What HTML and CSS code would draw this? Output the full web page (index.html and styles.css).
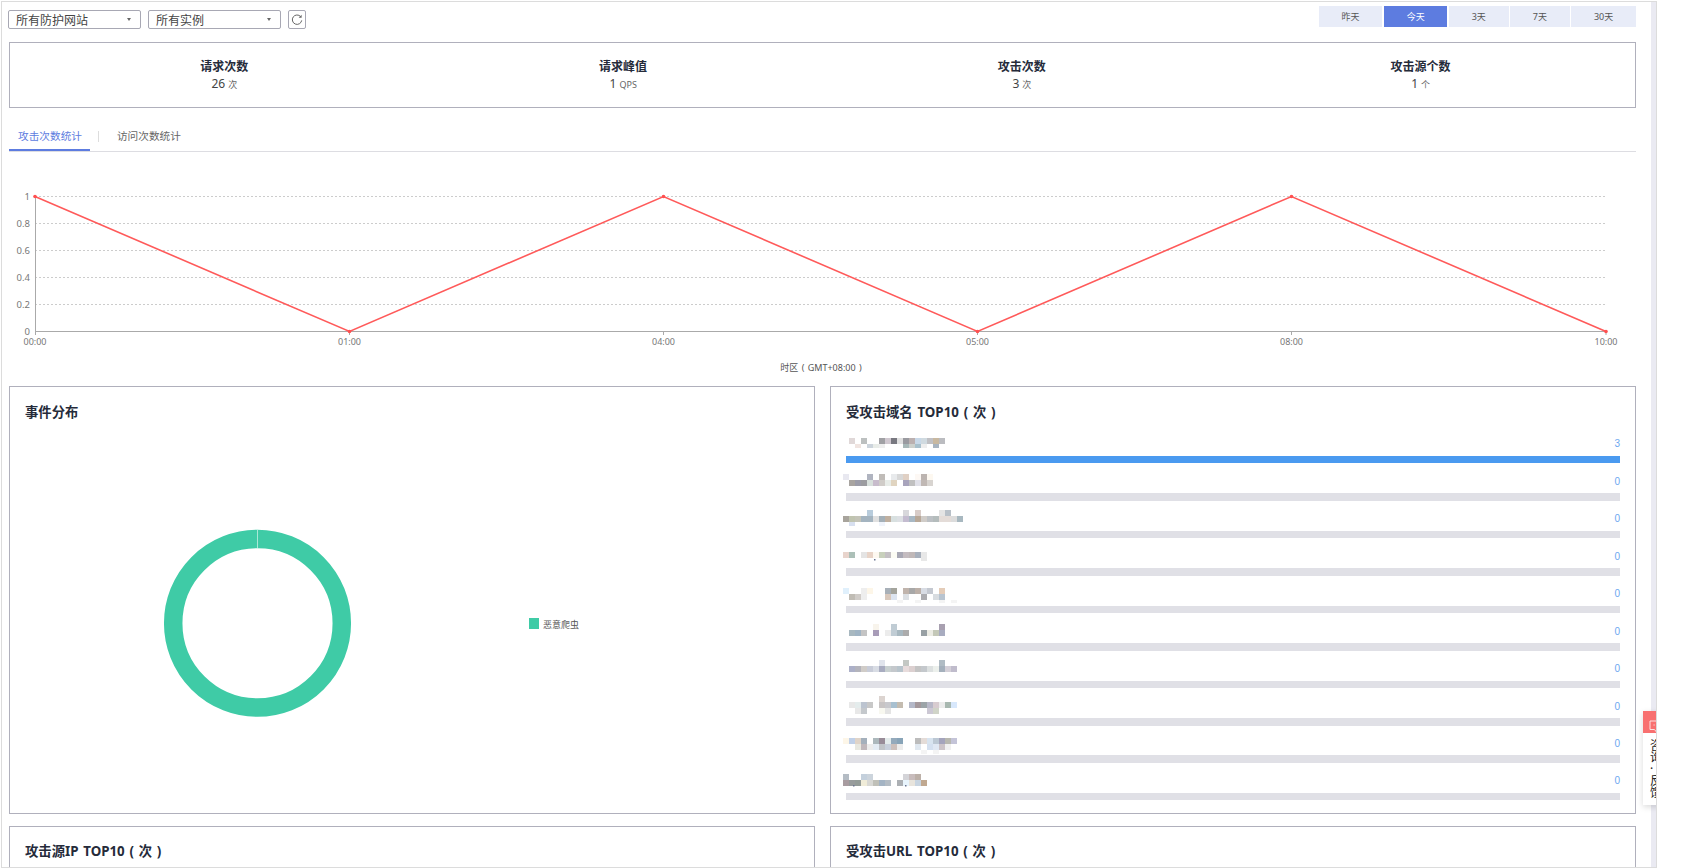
FILE: index.html
```html
<!DOCTYPE html>
<html lang="zh-CN">
<head>
<meta charset="utf-8">
<title>防护统计</title>
<link rel="stylesheet" href="styles.css">
</head>
<body>
<div class="frame">
  <main class="main">
    <div class="toolbar">
      <div class="filters">
        <div class="select"><span>所有防护网站</span><i class="caret"></i></div>
        <div class="select"><span>所有实例</span><i class="caret"></i></div>
        <button class="refresh" type="button" aria-label="刷新">
          <svg width="12" height="12" viewBox="0 0 12 12"><path class="refresh-arc" d="M9.6 2.6A4.7 4.7 0 1 0 10.7 6.4"/><path class="refresh-head" d="M10.6 0.8v3h-3z"/></svg>
        </button>
      </div>
      <div class="ranges">
        <button class="range" type="button">昨天</button>
        <button class="range is-active" type="button">今天</button>
        <button class="range" type="button">3天</button>
        <button class="range" type="button">7天</button>
        <button class="range" type="button">30天</button>
      </div>
    </div>

    <section class="stats">
      <div class="stat"><div class="stat-title">请求次数</div><div class="stat-value">26 <small>次</small></div></div>
      <div class="stat"><div class="stat-title">请求峰值</div><div class="stat-value">1 <small>QPS</small></div></div>
      <div class="stat"><div class="stat-title">攻击次数</div><div class="stat-value">3 <small>次</small></div></div>
      <div class="stat"><div class="stat-title">攻击源个数</div><div class="stat-value">1 <small>个</small></div></div>
    </section>

    <nav class="tabs">
      <a class="tab is-active">攻击次数统计</a>
      <i class="tab-sep"></i>
      <a class="tab tab-second">访问次数统计</a>
    </nav>

    <svg class="line-chart" width="1627" height="234" viewBox="9 152 1627 234">
      <g class="grid">
        <path d="M35 196.5H1606M35 223.5H1606M35 250.5H1606M35 277.5H1606M35 304.5H1606"/>
      </g>
      <path class="axis" d="M35.5 196V335M35 331.5H1606M349.5 331V335M663.5 331V335M977.5 331V335M1291.5 331V335M1606 331V335"/>
      <g class="ylabels">
        <text x="30" y="200">1</text>
        <text x="30" y="227">0.8</text>
        <text x="30" y="254">0.6</text>
        <text x="30" y="281">0.4</text>
        <text x="30" y="308">0.2</text>
        <text x="30" y="335">0</text>
      </g>
      <g class="xlabels">
        <text x="35" y="345">00:00</text>
        <text x="349.5" y="345">01:00</text>
        <text x="663.5" y="345">04:00</text>
        <text x="977.5" y="345">05:00</text>
        <text x="1291.5" y="345">08:00</text>
        <text x="1606" y="345">10:00</text>
      </g>
      <polyline class="series" points="35,196.5 349.5,331.5 663.5,196.5 977.5,331.5 1291.5,196.5 1606,331.5"/>
      <g class="dots">
        <circle cx="35" cy="196.5" r="1.8"/><circle cx="349.5" cy="331.5" r="1.8"/><circle cx="663.5" cy="196.5" r="1.8"/>
        <circle cx="977.5" cy="331.5" r="1.8"/><circle cx="1291.5" cy="196.5" r="1.8"/><circle cx="1606" cy="331.5" r="1.8"/>
      </g>
      <text class="zone" x="821" y="371">时区 ( GMT+08:00 )</text>
    </svg>

    <div class="cards">
      <section class="card">
        <h3 class="card-title">事件分布</h3>
        <svg class="pie" width="804" height="390" viewBox="10 423 804 390">
          <circle class="ring" cx="257.5" cy="623.3" r="84.3"/>
          <path class="ring-cut" d="M257.5 530V549"/>
          <rect class="swatch" x="529" y="618" width="10" height="11"/>
          <text class="legend" x="543" y="627.5">恶意爬虫</text>
        </svg>
      </section>

      <section class="card">
        <h3 class="card-title">受攻击域名 TOP10 ( 次 )</h3>
        <div class="rank-list">
          <div class="rank">
            <div class="rank-head">
              <svg class="mosaic" width="130" height="30">
                <rect class="px" x="6" y="12" fill="#e0d8d8"/><rect class="px" x="18" y="12" fill="#bcc0c0"/><rect class="px" x="36" y="12" fill="#a0a0a4"/><rect class="px" x="42" y="12" fill="#d0c8d0"/><rect class="px" x="48" y="12" fill="#787880"/><rect class="px" x="54" y="12" fill="#e0e0e0"/><rect class="px" x="60" y="12" fill="#9a9aa0"/><rect class="px" x="66" y="12" fill="#bbb0b0"/><rect class="px" x="72" y="12" fill="#c8d8e8"/><rect class="px" x="78" y="12" fill="#d0dae0"/><rect class="px" x="84" y="12" fill="#c0c0c4"/><rect class="px" x="90" y="12" fill="#c8b8a0"/><rect class="px" x="96" y="12" fill="#bbbcc0"/>
                <rect class="ph" x="12" y="18" fill="#f0e4e0"/><rect class="ph" x="24" y="18" fill="#ccd4dc"/><rect class="ph" x="30" y="18" fill="#e8ece8"/><rect class="ph" x="36" y="18" fill="#eeeeee"/><rect class="ph" x="60" y="18" fill="#a8b8b8"/><rect class="ph" x="66" y="18" fill="#ccd0cc"/><rect class="ph" x="72" y="18" fill="#a8c0cc"/><rect class="ph" x="78" y="18" fill="#eeeeee"/><rect class="ph" x="90" y="18" fill="#a8b4c0"/>
              </svg>
              <span class="rank-value">3</span>
            </div>
            <div class="rank-bar"><div class="rank-fill"></div></div>
          </div>
          <div class="rank">
            <div class="rank-head">
              <svg class="mosaic" width="130" height="30">
                <rect class="px" x="0" y="11" fill="#e8e8f0"/><rect class="px" x="24" y="11" fill="#b0b4c0"/><rect class="px" x="36" y="11" fill="#c0bcb8"/><rect class="px" x="48" y="11" fill="#e8eaec"/><rect class="px" x="54" y="11" fill="#d8d8d8"/><rect class="px" x="60" y="11" fill="#e0d0c4"/><rect class="px" x="72" y="11" fill="#fdf8f4"/><rect class="px" x="78" y="11" fill="#bcb4b0"/><rect class="px" x="84" y="11" fill="#fdf8f0"/>
                <rect class="px" x="6" y="17" fill="#a8a4a0"/><rect class="px" x="12" y="17" fill="#9c9ca8"/><rect class="px" x="18" y="17" fill="#9c9ca0"/><rect class="px" x="24" y="17" fill="#d8e0dc"/><rect class="px" x="30" y="17" fill="#c8bccc"/><rect class="px" x="36" y="17" fill="#d0ccc8"/><rect class="px" x="42" y="17" fill="#e8ece8"/><rect class="px" x="48" y="17" fill="#e0d4c0"/><rect class="px" x="60" y="17" fill="#a8a4bc"/><rect class="px" x="66" y="17" fill="#c0c0c0"/><rect class="px" x="72" y="17" fill="#e0e0e8"/><rect class="px" x="78" y="17" fill="#c0b8b4"/><rect class="px" x="84" y="17" fill="#d8d4d0"/>
              </svg>
              <span class="rank-value">0</span>
            </div>
            <div class="rank-bar"></div>
          </div>
          <div class="rank">
            <div class="rank-head">
              <svg class="mosaic" width="130" height="30">
                <rect class="px" x="24" y="9" fill="#b8ccdc"/><rect class="px" x="60" y="9" fill="#d8d8dc"/><rect class="px" x="72" y="9" fill="#d8ccc8"/><rect class="px" x="96" y="9" fill="#e4e4e4"/><rect class="px" x="102" y="9" fill="#b8c0c8"/>
                <rect class="px" x="0" y="15" fill="#a8a49c"/><rect class="px" x="6" y="15" fill="#c0c4b0"/><rect class="px" x="12" y="15" fill="#c4c4b8"/><rect class="px" x="18" y="15" fill="#a4b4c0"/><rect class="px" x="24" y="15" fill="#a4b4c0"/><rect class="px" x="30" y="15" fill="#e0e0e0"/><rect class="px" x="36" y="15" fill="#a4b0b8"/><rect class="px" x="42" y="15" fill="#c0b0a0"/><rect class="px" x="48" y="15" fill="#d8e0e0"/><rect class="px" x="54" y="15" fill="#dde0e4"/><rect class="px" x="60" y="15" fill="#c4bcd0"/><rect class="px" x="66" y="15" fill="#a8b8c4"/><rect class="px" x="72" y="15" fill="#b8a898"/><rect class="px" x="78" y="15" fill="#d0ccc8"/><rect class="px" x="84" y="15" fill="#bcc0c4"/><rect class="px" x="90" y="15" fill="#b4bcbc"/><rect class="px" x="96" y="15" fill="#e4dcd8"/><rect class="px" x="102" y="15" fill="#e4dcd8"/><rect class="px" x="108" y="15" fill="#dcdcdc"/><rect class="px" x="114" y="15" fill="#a8b8c0"/>
                <rect class="ph" x="6" y="21" fill="#d8e0f0"/><rect class="ph" x="36" y="21" fill="#f0f4fc"/>
              </svg>
              <span class="rank-value">0</span>
            </div>
            <div class="rank-bar"></div>
          </div>
          <div class="rank">
            <div class="rank-head">
              <svg class="mosaic" width="130" height="30">
                <rect class="px" x="0" y="14" fill="#e8d4cc"/><rect class="px" x="6" y="14" fill="#acc0b8"/><rect class="px" x="18" y="14" fill="#e4e4e4"/><rect class="px" x="24" y="14" fill="#e8d4c8"/><rect class="px" x="30" y="14" fill="#fdf8f0"/><rect class="px" x="36" y="14" fill="#c8d0bc"/><rect class="px" x="42" y="14" fill="#c4c0c4"/><rect class="px" x="48" y="14" fill="#fcfcf4"/><rect class="px" x="54" y="14" fill="#a8a8b4"/><rect class="px" x="60" y="14" fill="#c4bcc0"/><rect class="px" x="66" y="14" fill="#c0b8b8"/><rect class="px" x="72" y="14" fill="#a8b0bc"/><rect class="px" x="78" y="14" fill="#e8e8e8"/>
                <rect class="ps" x="78" y="20" fill="#e8e8e8" height="1"/>
                <rect class="dot" x="31" y="21" fill="#6a7490"/>
              </svg>
              <span class="rank-value">0</span>
            </div>
            <div class="rank-bar"></div>
          </div>
          <div class="rank">
            <div class="rank-head">
              <svg class="mosaic" width="130" height="30">
                <rect class="px" x="0" y="12" fill="#e0f0fc"/><rect class="px" x="18" y="12" fill="#eeeeee"/><rect class="px" x="24" y="12" fill="#fdf6e8"/><rect class="px" x="42" y="12" fill="#a8b0b8"/><rect class="px" x="48" y="12" fill="#a4a49c"/><rect class="px" x="60" y="12" fill="#c0b4ac"/><rect class="px" x="66" y="12" fill="#a8a8a8"/><rect class="px" x="72" y="12" fill="#bcb0a8"/><rect class="px" x="78" y="12" fill="#d8dce4"/><rect class="px" x="84" y="12" fill="#c4c8d0"/><rect class="px" x="96" y="12" fill="#e4ccb8"/>
                <rect class="px" x="6" y="18" fill="#c0bcb4"/><rect class="px" x="12" y="18" fill="#d0ccc8"/><rect class="px" x="18" y="18" fill="#eeeeee"/><rect class="px" x="42" y="18" fill="#d8c8bc"/><rect class="px" x="48" y="18" fill="#dce4f0"/><rect class="px" x="60" y="18" fill="#dce0e4"/><rect class="px" x="78" y="18" fill="#acacb0"/><rect class="px" x="90" y="18" fill="#d8dce0"/><rect class="px" x="96" y="18" fill="#b8c4d0"/>
                <rect class="ps" x="54" y="24" fill="#f4f4f4"/><rect class="ps" x="72" y="24" fill="#f4f4f4"/><rect class="ps" x="96" y="24" fill="#f4f4f4"/><rect class="ps" x="108" y="24" fill="#f4f4f4"/>
              </svg>
              <span class="rank-value">0</span>
            </div>
            <div class="rank-bar"></div>
          </div>
          <div class="rank">
            <div class="rank-head">
              <svg class="mosaic" width="130" height="30">
                <rect class="px" x="30" y="11" fill="#f8f4ec"/><rect class="px" x="48" y="11" fill="#c0ccd4"/><rect class="px" x="96" y="11" fill="#a8a0b0"/>
                <rect class="px" x="6" y="17" fill="#a8b8c0"/><rect class="px" x="12" y="17" fill="#a0b4c4"/><rect class="px" x="18" y="17" fill="#c4c4c4"/><rect class="px" x="30" y="17" fill="#a89cb8"/><rect class="px" x="42" y="17" fill="#ececec"/><rect class="px" x="48" y="17" fill="#c0ccd4"/><rect class="px" x="54" y="17" fill="#a8b8c0"/><rect class="px" x="60" y="17" fill="#acacac"/><rect class="px" x="78" y="17" fill="#98a0a4"/><rect class="px" x="84" y="17" fill="#ecece4"/><rect class="px" x="90" y="17" fill="#c4c8b8"/><rect class="px" x="96" y="17" fill="#a8acc0"/>
              </svg>
              <span class="rank-value">0</span>
            </div>
            <div class="rank-bar"></div>
          </div>
          <div class="rank">
            <div class="rank-head">
              <svg class="mosaic" width="130" height="30">
                <rect class="px" x="36" y="9" fill="#e0e4ec"/><rect class="px" x="60" y="9" fill="#c4c8c4"/><rect class="px" x="96" y="9" fill="#b0bcc4"/>
                <rect class="px" x="6" y="15" fill="#acb0c8"/><rect class="px" x="12" y="15" fill="#b4b4bc"/><rect class="px" x="18" y="15" fill="#d0ccc8"/><rect class="px" x="24" y="15" fill="#c8ccd8"/><rect class="px" x="30" y="15" fill="#d8dce4"/><rect class="px" x="36" y="15" fill="#a8acc0"/><rect class="px" x="42" y="15" fill="#c8d0d0"/><rect class="px" x="48" y="15" fill="#c4c8cc"/><rect class="px" x="54" y="15" fill="#b8c4cc"/><rect class="px" x="60" y="15" fill="#e8dcdc"/><rect class="px" x="66" y="15" fill="#dcd0d0"/><rect class="px" x="72" y="15" fill="#c4c4c4"/><rect class="px" x="78" y="15" fill="#c4c8cc"/><rect class="px" x="84" y="15" fill="#dce0e0"/><rect class="px" x="90" y="15" fill="#ecf0ec"/><rect class="px" x="96" y="15" fill="#a4b0bc"/><rect class="px" x="102" y="15" fill="#d4d0d8"/><rect class="px" x="108" y="15" fill="#c0bccc"/>
              </svg>
              <span class="rank-value">0</span>
            </div>
            <div class="rank-bar"></div>
          </div>
          <div class="rank">
            <div class="rank-head">
              <svg class="mosaic" width="130" height="30">
                <rect class="px" x="36" y="8" fill="#dcd4d0"/>
                <rect class="px" x="6" y="14" fill="#e8e8e8"/><rect class="px" x="12" y="14" fill="#e4ecec"/><rect class="px" x="18" y="14" fill="#bcc4d0"/><rect class="px" x="24" y="14" fill="#c8c8c8"/><rect class="px" x="36" y="14" fill="#c8c4c4"/><rect class="px" x="42" y="14" fill="#c8c8cc"/><rect class="px" x="48" y="14" fill="#a8c0d0"/><rect class="px" x="54" y="14" fill="#c4bcb0"/><rect class="px" x="66" y="14" fill="#b4b8c8"/><rect class="px" x="72" y="14" fill="#a4989c"/><rect class="px" x="78" y="14" fill="#9ca4a8"/><rect class="px" x="84" y="14" fill="#b8b8c8"/><rect class="px" x="90" y="14" fill="#d8ccd0"/><rect class="px" x="96" y="14" fill="#ececec"/><rect class="px" x="102" y="14" fill="#a8b8b0"/><rect class="px" x="108" y="14" fill="#d8e8fc"/>
                <rect class="px" x="12" y="20" fill="#e8e8e8"/><rect class="px" x="18" y="20" fill="#c4c8cc"/><rect class="px" x="36" y="20" fill="#f8f8f0"/><rect class="px" x="42" y="20" fill="#e4e4e4"/><rect class="px" x="84" y="20" fill="#ccc8d4"/><rect class="px" x="90" y="20" fill="#d0d4c8"/>
              </svg>
              <span class="rank-value">0</span>
            </div>
            <div class="rank-bar"></div>
          </div>
          <div class="rank">
            <div class="rank-head">
              <svg class="mosaic" width="130" height="30">
                <rect class="px" x="0" y="12" fill="#fdf6e8"/><rect class="px" x="6" y="12" fill="#c0d0e8"/><rect class="px" x="12" y="12" fill="#e0d4c8"/><rect class="px" x="18" y="12" fill="#a4b0bc"/><rect class="px" x="30" y="12" fill="#acb8bc"/><rect class="px" x="36" y="12" fill="#988c98"/><rect class="px" x="42" y="12" fill="#e4ecec"/><rect class="px" x="48" y="12" fill="#94aabc"/><rect class="px" x="54" y="12" fill="#88a4b8"/><rect class="px" x="72" y="12" fill="#bcbcbc"/><rect class="px" x="78" y="12" fill="#e4dcd8"/><rect class="px" x="84" y="12" fill="#d8e4f0"/><rect class="px" x="90" y="12" fill="#bcc8d4"/><rect class="px" x="96" y="12" fill="#a4a4bc"/><rect class="px" x="102" y="12" fill="#b8b8b0"/><rect class="px" x="108" y="12" fill="#c4c4d8"/>
                <rect class="px" x="12" y="18" fill="#e8e8e0"/><rect class="px" x="18" y="18" fill="#c0b8bc"/><rect class="px" x="24" y="18" fill="#ececec"/><rect class="px" x="30" y="18" fill="#e4ecf4"/><rect class="px" x="36" y="18" fill="#c0c4c8"/><rect class="px" x="42" y="18" fill="#c8d0dc"/><rect class="px" x="48" y="18" fill="#ccc0bc"/><rect class="px" x="54" y="18" fill="#ececec"/><rect class="px" x="72" y="18" fill="#e0e8f0"/><rect class="px" x="84" y="18" fill="#d4e0f0"/><rect class="px" x="90" y="18" fill="#e0e8f4"/><rect class="px" x="96" y="18" fill="#ccc4c8"/><rect class="px" x="102" y="18" fill="#f0f0f0"/>
                <rect class="ph" x="78" y="24" fill="#f4f4f4"/><rect class="ph" x="90" y="24" fill="#f4f4f4"/>
              </svg>
              <span class="rank-value">0</span>
            </div>
            <div class="rank-bar"></div>
          </div>
          <div class="rank">
            <div class="rank-head">
              <svg class="mosaic" width="130" height="30">
                <rect class="px" x="0" y="11" fill="#b4bcc4"/><rect class="px" x="18" y="11" fill="#c4d0dc"/><rect class="px" x="24" y="11" fill="#ccd4dc"/><rect class="px" x="60" y="11" fill="#d4d4d8"/><rect class="px" x="66" y="11" fill="#c8bcbc"/><rect class="px" x="72" y="11" fill="#bcb0a8"/>
                <rect class="px" x="0" y="17" fill="#a89ca0"/><rect class="px" x="6" y="17" fill="#989c9c"/><rect class="px" x="12" y="17" fill="#949c98"/><rect class="px" x="18" y="17" fill="#f0ecd8"/><rect class="px" x="24" y="17" fill="#d8d8d4"/><rect class="px" x="30" y="17" fill="#c0c0b8"/><rect class="px" x="36" y="17" fill="#a4b4c4"/><rect class="px" x="42" y="17" fill="#b4bcc4"/><rect class="px" x="54" y="17" fill="#acb0b4"/><rect class="px" x="60" y="17" fill="#e8f4fc"/><rect class="px" x="66" y="17" fill="#e8e4dc"/><rect class="px" x="72" y="17" fill="#c8d4e0"/><rect class="px" x="78" y="17" fill="#c0a890"/>
                <rect class="dot" x="10" y="22" fill="#6a7490"/><rect class="dot" x="62" y="22" fill="#6a7490"/>
              </svg>
              <span class="rank-value">0</span>
            </div>
            <div class="rank-bar"></div>
          </div>
        </div>
      </section>

      <section class="card card-clipped">
        <h3 class="card-title">攻击源IP TOP10 ( 次 )</h3>
      </section>
      <section class="card card-clipped">
        <h3 class="card-title">受攻击URL TOP10 ( 次 )</h3>
      </section>
    </div>
  </main>
  <div class="scrollbar"></div>

  <aside class="feedback">
    <div class="feedback-icon">
      <svg width="14" height="13" viewBox="0 0 14 13"><path class="bubble" d="M1 1h12v8.5H8.5L7 11.5 5.5 9.5H1z"/><path class="bubble-dots" d="M4.5 5h1.2M7.5 5h1.2"/></svg>
    </div>
    <div class="feedback-text">咨<br>询<br>·<br>反<br>馈</div>
  </aside>
</div>
</body>
</html>
```

FILE: styles.css
```css
* { box-sizing: border-box; }

html, body {
  margin: 0;
  height: 100%;
  overflow: hidden;
  background: #fff;
}

body {
  font-family: "Noto Sans", "Noto Sans CJK SC", sans-serif;
  color: #333;
}

.frame {
  position: relative;
  display: flex;
  width: 1656px;
  height: 867px;
  margin: 1px 0 0 1px;
  border: 1px solid #dcdcdc;
  overflow: hidden;
  background: #fff;
}

.main {
  flex: 1;
  min-width: 0;
  padding: 4px 15px 0 7px;
  overflow: hidden;
}

.scrollbar {
  flex: none;
  width: 5px;
  background: #eaeaf2;
}

/* toolbar */
.toolbar {
  display: flex;
  justify-content: space-between;
  align-items: flex-start;
  height: 36px;
}

.filters {
  display: flex;
  gap: 7px;
  margin: 4px 0 0 -1px;
}

.select {
  position: relative;
  width: 133px;
  height: 19px;
  padding-left: 7px;
  border: 1px solid #a8a8b4;
  border-radius: 2px;
  font-size: 12px;
  line-height: 20px;
  color: #444;
}

.caret {
  position: absolute;
  right: 9px;
  top: 7px;
  width: 0;
  height: 0;
  border-left: 2.5px solid transparent;
  border-right: 2.5px solid transparent;
  border-top: 3px solid #666;
}

.refresh {
  display: flex;
  align-items: center;
  justify-content: center;
  width: 18px;
  height: 19px;
  padding: 0;
  border: 1px solid #a8a8b4;
  border-radius: 2px;
  background: #fff;
}

.refresh-arc {
  fill: none;
  stroke: #666;
  stroke-width: 1;
}

.refresh-head { fill: #666; }

.ranges {
  display: flex;
  gap: 1.5px;
}

.range {
  height: 21px;
  padding: 0 22.75px;
  border: 0;
  background: #e8ecf8;
  font: 9px/21px "Noto Sans", "Noto Sans CJK SC", sans-serif;
  color: #555;
}

.range.is-active {
  background: #5d7ce0;
  color: #fff;
}

/* stats */
.stats {
  display: grid;
  grid-template-columns: repeat(4, 1fr);
  height: 66px;
  padding: 16px 15px 0;
  border: 1px solid #b0b0bc;
}

.stat { text-align: center; }

.stat-title {
  font-size: 12px;
  font-weight: 700;
  line-height: 16px;
  color: #252b3a;
}

.stat-value {
  font-size: 12px;
  line-height: 17px;
  color: #444;
}

.stat-value small {
  font-size: 9px;
  color: #666;
}

/* tabs */
.tabs {
  display: flex;
  align-items: center;
  height: 44px;
  border-bottom: 1px solid #dddde2;
}

.tab {
  display: block;
  height: 43px;
  padding: 20px 8px 0 9px;
  font-size: 10.67px;
  line-height: 16px;
  color: #666;
}

.tab.is-active {
  color: #5d7ce0;
  border-bottom: 2px solid #5d7ce0;
}

.tab-sep {
  width: 1px;
  height: 11px;
  margin: 14px 0 0 8px;
  background: #ddd;
}

.tab-second { margin-left: 9px; }

/* line chart */
.line-chart { display: block; }

.grid path {
  fill: none;
  stroke: #ccc;
  stroke-width: 1;
  stroke-dasharray: 2 2;
}

.axis {
  fill: none;
  stroke: #aaa;
  stroke-width: 1;
}

.ylabels text {
  font-size: 9.5px;
  fill: #777;
  text-anchor: end;
}

.xlabels text {
  font-size: 9px;
  fill: #777;
  text-anchor: middle;
}

.series {
  fill: none;
  stroke: #ff5a5a;
  stroke-width: 1.6;
}

.dots circle { fill: #ff5050; }

.zone {
  font-size: 9px;
  word-spacing: 1px;
  fill: #555;
  text-anchor: middle;
}

/* cards */
.cards {
  display: grid;
  grid-template-columns: 806px 806px;
  grid-template-rows: 428px 60px;
  column-gap: 15px;
  row-gap: 12px;
}

.card {
  border: 1px solid #b0b0bc;
  min-width: 0;
}

.card-title {
  margin: 0;
  padding: 15px 15px 0;
  font-size: 13.33px;
  font-weight: 700;
  line-height: 20px;
  word-spacing: 1.3px;
  color: #252b3a;
}

.card-clipped .card-title { padding-top: 14px; }

.pie { display: block; margin-top: 1px; }

.ring {
  fill: none;
  stroke: #3fcba6;
  stroke-width: 18.5;
}

.ring-cut {
  stroke: #d8f5ec;
  stroke-width: 0.7;
}

.swatch { fill: #3fcba6; }

.legend {
  font-size: 9px;
  fill: #555;
}

/* ranking list */
.rank-list {
  padding: 4px 15px 0;
}

.rank-head {
  display: flex;
  justify-content: space-between;
  align-items: flex-end;
  height: 29.94px;
}

.mosaic {
  display: block;
  margin-left: -3px;
  align-self: flex-start;
}

.px { width: 6px; height: 6px; }
.ph { width: 6px; height: 4px; }
.ps { width: 6px; height: 3px; }
.dot { width: 1.5px; height: 1.5px; }

.rank-value {
  margin-bottom: 5.5px;
  font-family: "Liberation Sans", sans-serif;
  font-size: 10px;
  line-height: 12px;
  color: #6ea8f0;
}

.rank-bar {
  height: 7.5px;
  background: #e0e0e6;
}

.rank-fill {
  height: 100%;
  background: #4a9af0;
}

/* feedback */
.feedback {
  position: absolute;
  left: 1641px;
  top: 709px;
  width: 40px;
  height: 94px;
  background: #fff;
  box-shadow: 0 2px 6px rgba(0, 0, 0, 0.15);
}

.feedback-icon {
  height: 22px;
  padding: 5px 0 0 6px;
  background: #f87070;
}

.bubble {
  fill: none;
  stroke: #fde0e0;
  stroke-width: 1;
}

.bubble-dots {
  stroke: #fde0e0;
  stroke-width: 1;
}

.feedback-text {
  padding: 7px 0 0 7px;
  font-size: 12px;
  line-height: 11.7px;
  color: #222;
}
```
